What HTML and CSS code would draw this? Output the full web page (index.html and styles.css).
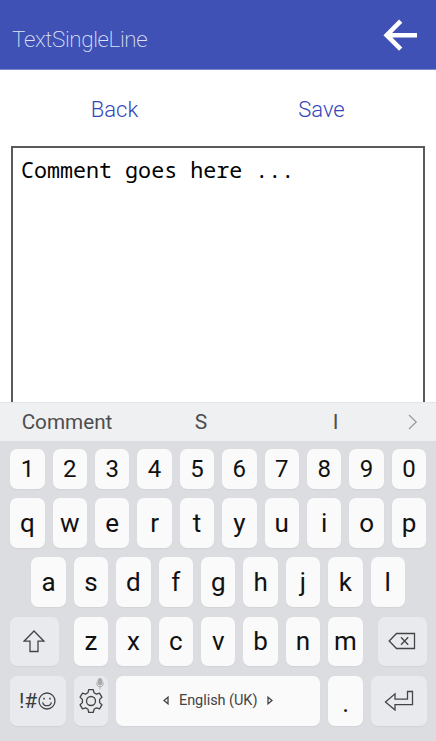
FILE: index.html
```html
<!DOCTYPE html>
<html lang="en">
<head>
<meta charset="utf-8">
<title>TextSingleLine</title>
<link rel="stylesheet" href="styles.css">
</head>
<body>
<header class="appbar">
  <h1>TextSingleLine</h1>
  <svg class="arrow" width="36" height="34" viewBox="0 0 36 34" fill="none" stroke="#fff" stroke-width="4.6"><path d="M18.7 3.2 4.7 17.2 18.7 31.2M5 17.2H35"/></svg>
</header>
<nav class="actions"><a>Back</a><a>Save</a></nav>
<main class="editor">Comment goes here ...</main>
<section class="keyboard">
  <div class="suggestions">
    <span>Comment</span><span>S</span><span>I</span>
    <svg class="more" width="10" height="16" viewBox="0 0 10 16" fill="none" stroke="#999a9d" stroke-width="1.2"><path d="M1 1 8.2 8 1 15"/></svg>
  </div>
  <div class="keys">
    <div class="row numbers"><b>1</b><b>2</b><b>3</b><b>4</b><b>5</b><b>6</b><b>7</b><b>8</b><b>9</b><b>0</b></div>
    <div class="row"><b>q</b><b>w</b><b>e</b><b>r</b><b>t</b><b>y</b><b>u</b><b>i</b><b>o</b><b>p</b></div>
    <div class="row"><b>a</b><b>s</b><b>d</b><b>f</b><b>g</b><b>h</b><b>j</b><b>k</b><b>l</b></div>
    <div class="row spread">
      <b class="fn side"><svg width="22" height="23" viewBox="0 0 22 23"><path d="M11 1 21 11.2H15V21.5H7V11.2H1Z"/></svg></b>
      <div class="row"><b>z</b><b>x</b><b>c</b><b>v</b><b>b</b><b>n</b><b>m</b></div>
      <b class="fn side"><svg width="28" height="18" viewBox="0 0 28 18"><path d="M1.2 9 8.5 1.5H26.5V16.5H8.5ZM13 5.2l7.2 7.6M20.2 5.2 13 12.8"/></svg></b>
    </div>
    <div class="row">
      <b class="fn wide symbols"><span>!#</span><svg width="18" height="18" viewBox="0 0 18 18"><circle cx="9" cy="9" r="8"/><path d="M4.6 10.3Q5.5 13.7 9 13.7T13.4 10.3"/><path class="dot" d="M5.3 5.8h1.5v1.8H5.3zM11.2 5.8h1.5v1.8h-1.5z"/></svg></b>
      <b class="fn settings">
        <svg width="26" height="26" viewBox="0 0 26 26"><path d="M10 4.7 10.7 1.6H15.3L16 4.7 18.5 6.1 21.5 5.2 23.9 9.2 21.6 11.4V14.6L23.9 16.8 21.5 20.8 18.5 19.9 16 21.3 15.3 24.4H10.7L10 21.3 7.5 19.9 4.5 20.8 2.1 16.8 4.4 14.6V11.4L2.1 9.2 4.5 5.2 7.5 6.1Z" stroke-linejoin="round"/><circle cx="13" cy="13" r="4.5"/></svg>
        <svg class="mic" width="8" height="12" viewBox="0 0 8 12"><rect x="2" y=".5" width="4" height="6.5" rx="2"/><path d="M.7 4.5V5.5C.7 9.7 7.3 9.7 7.3 5.5V4.5M4 8.7V11.5"/></svg>
      </b>
      <b class="space"><svg width="6" height="9" viewBox="0 0 6 9"><path d="M5 1.2V7.8L1 4.5Z"/></svg><span>English (UK)</span><svg width="6" height="9" viewBox="0 0 6 9"><path d="M1 1.2V7.8L5 4.5Z"/></svg></b>
      <b class="period">.</b>
      <b class="fn wide"><svg width="30" height="21" viewBox="0 0 30 21"><path d="M1.5 12 11 3.8V9.2H23.5V1.5H28.5V14.7H11V20Z"/></svg></b>
    </div>
  </div>
</section>
</body>
</html>
```
FILE: styles.css
```css
* { box-sizing: border-box; }
body {
  margin: 0;
  height: 741px;
  overflow: hidden;
  display: flex;
  flex-direction: column;
  background: #fff;
  font-family: Roboto, sans-serif;
}
.appbar {
  height: 70px;
  padding: 9px 18px 0 12px;
  display: flex;
  align-items: center;
  justify-content: space-between;
  background: #3f51b5;
  border-bottom: 1px solid #7c88cd;
  color: #dfe3f8;
}
.appbar h1 { margin: 0; font-size: 22.4px; font-weight: 200; letter-spacing: -0.38px; }
.arrow { margin-top: -9px; }
.actions {
  height: 76px;
  padding: 2px 11px 0;
  display: grid;
  grid-template-columns: 1fr 1fr;
  align-items: center;
  text-align: center;
  font-size: 22px;
  font-weight: 300;
  color: #3347b8;
}
.editor {
  flex: 1;
  margin: 0 11px;
  padding: 7px 8px;
  border: solid #5a5a5a;
  border-width: 2px 2px 0;
  font: 21.7px/30px "Noto Sans Mono", "DejaVu Sans Mono", monospace;
  color: #000;
}
.keyboard { height: 339px; background: #dcdde1; }
.suggestions {
  height: 39px;
  display: grid;
  grid-template-columns: 134px 134px 135px 1fr;
  align-items: center;
  text-align: center;
  background: #eff0f2;
  border-top: 1px solid #e3e5e6;
  font-size: 21px;
  color: #4d4d4f;
}
.suggestions span:first-child { font-size: 20.7px; }
.more { margin-left: 5px; }
.keys {
  padding: 8px 10.4px 0 9.6px;
  display: grid;
  grid-template-rows: 39.5px 49.8px 49.8px 49.8px 50px;
  row-gap: 9.5px;
}
.row { display: flex; justify-content: center; gap: 8px; }
.row.spread { justify-content: space-between; gap: 0; }
.row b {
  flex: none;
  width: 34.4px;
  display: flex;
  align-items: center;
  justify-content: center;
  border-radius: 7px;
  background: #fafafa;
  box-shadow: 0 1px 1px #d2d3d6;
  color: #111;
  font-size: 26px;
  font-weight: 400;
}
.row.numbers b { font-size: 24px; }
.row b.fn { background: #e9eaee; color: #3c3c3e; }
.row b.side { width: 49px; }
.row b.wide { width: 56px; }
.row b.space { width: 204.4px; gap: 10px; font-size: 14.5px; letter-spacing: -0.05px; color: #444; }
.row b.period { padding-top: 5px; }
.keys svg { fill: none; stroke: #444; stroke-width: 1.3; }
.keys svg .dot { fill: #444; stroke: none; }
.row b.symbols { font-size: 21px; gap: 1px; }
.settings { position: relative; }
.keys .mic { position: absolute; top: 2px; right: 4px; stroke: #aaa; stroke-width: 1; }
.keys .mic rect { fill: #aaa; }
```
